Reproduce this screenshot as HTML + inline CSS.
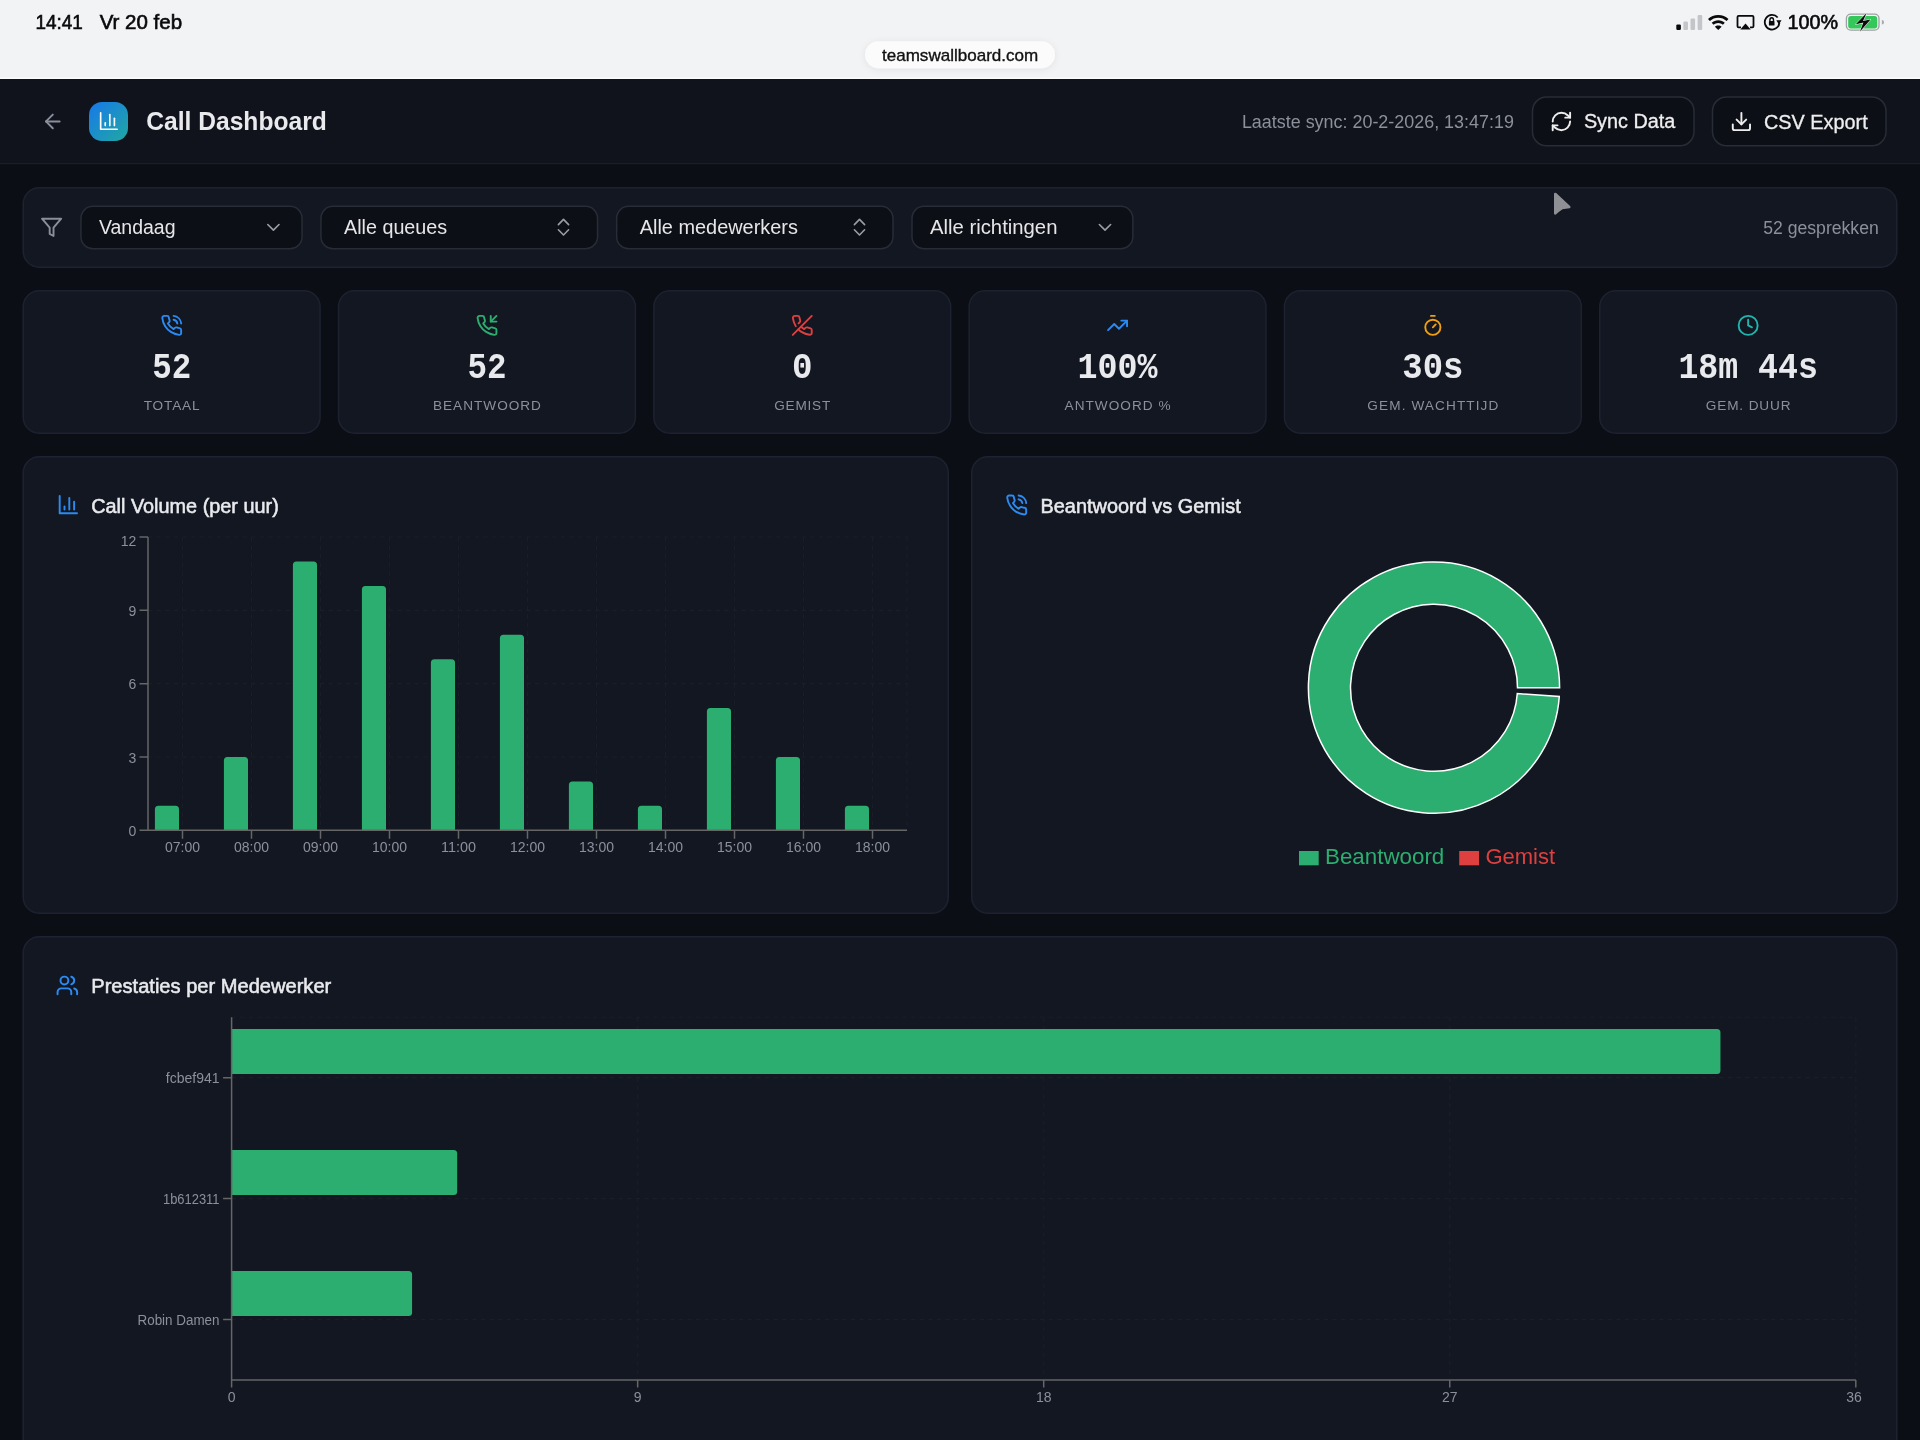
<!DOCTYPE html><html><head><meta charset="utf-8"><title>Call Dashboard</title><style>html,body{margin:0;padding:0;background:#0b0e14;width:1920px;height:1440px;overflow:hidden}svg{display:block;font-family:"Liberation Sans",sans-serif;will-change:transform}</style></head><body>
<svg width="1920" height="1440" viewBox="0 0 1920 1440">
<defs><linearGradient id="lg" x1="0" y1="0" x2="1" y2="1"><stop offset="0" stop-color="#1778ea"/><stop offset="1" stop-color="#20a9a2"/></linearGradient><filter id="sh" x="-20%" y="-50%" width="140%" height="200%"><feDropShadow dx="0" dy="1" stdDeviation="3.5" flood-color="#000" flood-opacity="0.07"/></filter></defs>
<rect x="0" y="0" width="1920" height="1440" fill="#0b0e14"/>
<rect x="0" y="0" width="1920" height="79" fill="#f2f3f5"/>
<rect x="0" y="77.5" width="1920" height="1.5" fill="#fbfbfc"/>
<text x="35.5" y="29" font-size="19.5" fill="#0a0a0a" stroke="#0a0a0a" stroke-width="0.6" textLength="47.3" lengthAdjust="spacingAndGlyphs">14:41</text>
<text x="99.7" y="29" font-size="19.5" fill="#0a0a0a" stroke="#0a0a0a" stroke-width="0.6" textLength="82.4" lengthAdjust="spacingAndGlyphs">Vr 20 feb</text>
<rect x="865" y="41.25" width="190" height="27" rx="13.5" fill="#fbfbfc" filter="url(#sh)"/>
<text x="882" y="60.5" font-size="17" fill="#111111" stroke="#111111" stroke-width="0.35" textLength="156.2" lengthAdjust="spacingAndGlyphs">teamswallboard.com</text>
<rect x="1676.30" y="24.40" width="4.6" height="5.6" rx="1.2" fill="#0a0a0a"/>
<rect x="1683.40" y="21.50" width="4.6" height="8.5" rx="1.2" fill="#c4c5c8"/>
<rect x="1690.50" y="18.50" width="4.6" height="11.5" rx="1.2" fill="#c4c5c8"/>
<rect x="1697.60" y="15.00" width="4.6" height="15" rx="1.2" fill="#c4c5c8"/>
<g transform="translate(1708,15)" fill="#0a0a0a"><path d="M10.25 0C6.3 0 2.75 1.5 0 4l1.9 1.95C4.15 3.9 7.05 2.7 10.25 2.7s6.1 1.2 8.35 3.25L20.5 4C17.75 1.5 14.2 0 10.25 0z"/><path d="M10.25 5.2c-2.5 0-4.8 .95-6.55 2.55l1.9 1.95c1.25-1.1 2.9-1.8 4.65-1.8s3.4.7 4.65 1.8l1.9-1.95C15.05 6.15 12.75 5.2 10.25 5.2z"/><path d="M10.25 10.4c-1.3 0-2.5.5-3.4 1.3L10.25 15l3.4-3.3c-.9-.8-2.1-1.3-3.4-1.3z"/></g>
<g transform="translate(1736.5,15)"><path d="M4.5 11.5H2.2A1.2 1.2 0 0 1 1 10.3V1.2A1.2 1.2 0 0 1 2.2 0h13.6A1.2 1.2 0 0 1 17 1.2v9.1a1.2 1.2 0 0 1-1.2 1.2h-2.3" fill="none" stroke="#0a0a0a" stroke-width="1.8" transform="translate(0,0.9)"/><path d="M9 8.6l5.2 5.8H3.8z" fill="#0a0a0a"/></g>
<g fill="none" stroke="#0a0a0a" stroke-width="1.8"><path d="M1779.37 22.84 A7.3 7.3 0 1 1 1777.69 17.5"/></g>
<path d="M1776.3 20.3h5.2l-2.6 4.2z" fill="#0a0a0a"/>
<rect x="1768.9" y="21.0" width="5.6" height="4.6" rx="0.7" fill="#0a0a0a"/>
<path d="M1769.9 21.3v-1.2a1.8 2.3 0 0 1 3.6 0v1.2" fill="none" stroke="#0a0a0a" stroke-width="1.4"/>
<text x="1787.5" y="29" font-size="20" fill="#0a0a0a" stroke="#0a0a0a" stroke-width="0.6" textLength="50.5" lengthAdjust="spacingAndGlyphs">100%</text>
<rect x="1846.4" y="14.1" width="32.6" height="16" rx="4.3" fill="none" stroke="#9fa0a3" stroke-width="1.3"/>
<rect x="1848.2" y="15.9" width="29" height="12.5" rx="2.6" fill="#34c759"/>
<path d="M1881.9 20v4.6a2.1 2.3 0 0 0 0-4.6z" fill="#a9aaad"/>
<path d="M1866.6 13.1L1855.8 24.3L1863.4 22.6L1860.0 31.4L1870.5 19.5L1863.0 21.1Z" fill="#0a0a0a" stroke="#f2f3f5" stroke-width="1.1" stroke-linejoin="round"/>
<path d="M1866.6 13.1L1855.8 24.3L1863.4 22.6L1860.0 31.4L1870.5 19.5L1863.0 21.1Z" fill="#0a0a0a"/>
<rect x="0" y="79" width="1920" height="84.5" fill="#10131b"/>
<rect x="0" y="163" width="1920" height="1.2" fill="#1a1e28"/>
<g transform="translate(41.10,109.70) scale(0.9750)" fill="none" stroke="#8a8f9c" stroke-width="2" stroke-linecap="round" stroke-linejoin="round"><path d="m12 19-7-7 7-7"/><path d="M19 12H5"/></g>
<rect x="89" y="102" width="39" height="39" rx="13" fill="url(#lg)"/>
<g transform="translate(97.90,110.00) scale(0.9167)" fill="none" stroke="#ffffff" stroke-width="1.8" stroke-linecap="round" stroke-linejoin="round"><path d="M3 3v18h18"/><path d="M18 17V9"/><path d="M13 17V5"/><path d="M8 17v-3"/></g>
<text x="146.25" y="130.2" font-size="26" fill="#e9eaed" font-weight="bold" textLength="180.5" lengthAdjust="spacingAndGlyphs">Call Dashboard</text>
<text x="1241.9" y="127.8" font-size="18" fill="#8b909b" textLength="272" lengthAdjust="spacingAndGlyphs">Laatste sync: 20-2-2026, 13:47:19</text>
<rect x="1532.5" y="97" width="161.5" height="48.75" rx="14" fill="#0c0f15" stroke="#272c37" stroke-width="1.5"/>
<g transform="translate(1549.80,109.90) scale(0.9667)" fill="none" stroke="#eeeeef" stroke-width="2" stroke-linecap="round" stroke-linejoin="round"><path d="M3 12a9 9 0 0 1 9-9 9.75 9.75 0 0 1 6.74 2.74L21 8"/><path d="M21 3v5h-5"/><path d="M21 12a9 9 0 0 1-9 9 9.75 9.75 0 0 1-6.74-2.74L3 16"/><path d="M8 16H3v5"/></g>
<text x="1583.9" y="128.1" font-size="19.5" fill="#eeeeef" stroke="#eeeeef" stroke-width="0.3" textLength="91.5" lengthAdjust="spacingAndGlyphs">Sync Data</text>
<rect x="1712.5" y="97" width="173.5" height="48.75" rx="14" fill="#0c0f15" stroke="#272c37" stroke-width="1.5"/>
<g transform="translate(1729.90,110.00) scale(0.9583)" fill="none" stroke="#eeeeef" stroke-width="2" stroke-linecap="round" stroke-linejoin="round"><path d="M21 15v4a2 2 0 0 1-2 2H5a2 2 0 0 1-2-2v-4"/><polyline points="7 10 12 15 17 10"/><line x1="12" x2="12" y1="15" y2="3"/></g>
<text x="1764" y="128.5" font-size="20" fill="#eeeeef" stroke="#eeeeef" stroke-width="0.3" textLength="103.7" lengthAdjust="spacingAndGlyphs">CSV Export</text>
<rect x="23.25" y="187.75" width="1873.5" height="79.5" rx="16" fill="#131721" stroke="#1d2230" stroke-width="1.5"/>
<g transform="translate(40.10,215.80) scale(0.9583)" fill="none" stroke="#8a8f9c" stroke-width="2" stroke-linecap="round" stroke-linejoin="round"><polygon points="22 3 2 3 10 12.46 10 19 14 21 14 12.46 22 3"/></g>
<rect x="80.95" y="206.35" width="221.1" height="42.3" rx="12" fill="#0c0f15" stroke="#272c37" stroke-width="1.5"/>
<text x="98.9" y="234" font-size="20" fill="#e6e6e9" textLength="76.6" lengthAdjust="spacingAndGlyphs">Vandaag</text>
<g transform="translate(262.15,216.10) scale(0.9375)" fill="none" stroke="#9a9ea8" stroke-width="1.75" stroke-linecap="round" stroke-linejoin="round"><path d="m6 9 6 6 6-6"/></g>
<rect x="320.95" y="206.35" width="276.6" height="42.3" rx="12" fill="#0c0f15" stroke="#272c37" stroke-width="1.5"/>
<text x="344.0" y="234" font-size="20" fill="#e6e6e9" textLength="103.2" lengthAdjust="spacingAndGlyphs">Alle queues</text>
<path d="M558.40 224.6L563.50 219.4L568.60 224.6M558.40 229.8L563.50 235.0L568.60 229.8" fill="none" stroke="#9a9ea8" stroke-width="1.6" stroke-linecap="round" stroke-linejoin="round"/>
<rect x="616.65" y="206.35" width="276.35" height="42.3" rx="12" fill="#0c0f15" stroke="#272c37" stroke-width="1.5"/>
<text x="639.6999999999999" y="234" font-size="20" fill="#e6e6e9" textLength="158.2" lengthAdjust="spacingAndGlyphs">Alle medewerkers</text>
<path d="M854.40 224.6L859.50 219.4L864.60 224.6M854.40 229.8L859.50 235.0L864.60 229.8" fill="none" stroke="#9a9ea8" stroke-width="1.6" stroke-linecap="round" stroke-linejoin="round"/>
<rect x="912.0" y="206.35" width="220.85" height="42.3" rx="12" fill="#0c0f15" stroke="#272c37" stroke-width="1.5"/>
<text x="929.95" y="234" font-size="20" fill="#e6e6e9" textLength="127.5" lengthAdjust="spacingAndGlyphs">Alle richtingen</text>
<g transform="translate(1093.75,216.10) scale(0.9375)" fill="none" stroke="#9a9ea8" stroke-width="1.75" stroke-linecap="round" stroke-linejoin="round"><path d="m6 9 6 6 6-6"/></g>
<text x="1763.25" y="233.75" font-size="18" fill="#8b909b" textLength="115.5" lengthAdjust="spacingAndGlyphs">52 gesprekken</text>
<path d="M1555.3 194.0L1569.2 207.0Q1565 207.6 1562.2 208.0Q1558.5 210.5 1555.3 213.3Z" fill="#8f9095" stroke="#8f9095" stroke-width="2.6" stroke-linejoin="round"/>
<rect x="23.25" y="290.75" width="296.8" height="142.5" rx="16" fill="#131721" stroke="#1d2230" stroke-width="1.5"/>
<g transform="translate(160.25,314.00) scale(0.9500)" fill="none" stroke="#2b8bf2" stroke-width="2" stroke-linecap="round" stroke-linejoin="round"><path d="M22 16.92v3a2 2 0 0 1-2.18 2 19.79 19.79 0 0 1-8.63-3.07 19.5 19.5 0 0 1-6-6 19.79 19.79 0 0 1-3.07-8.67A2 2 0 0 1 4.11 2h3a2 2 0 0 1 2 1.72 12.84 12.84 0 0 0 .7 2.81 2 2 0 0 1-.45 2.11L8.09 9.91a16 16 0 0 0 6 6l1.27-1.27a2 2 0 0 1 2.11-.45 12.84 12.84 0 0 0 2.81.7A2 2 0 0 1 22 16.92z"/><path d="M14.05 2a9 9 0 0 1 8 7.94"/><path d="M14.05 6A5 5 0 0 1 18 10"/></g>
<text x="171.65" y="378.2" font-size="37" fill="#e9eaed" font-weight="bold" text-anchor="middle" textLength="39" lengthAdjust="spacingAndGlyphs" font-family="Liberation Mono">52</text>
<text x="171.65" y="410" font-size="13.6" fill="#8b909b" text-anchor="middle" textLength="55.9" lengthAdjust="spacing">TOTAAL</text>
<rect x="338.55" y="290.75" width="296.8" height="142.5" rx="16" fill="#131721" stroke="#1d2230" stroke-width="1.5"/>
<g transform="translate(475.55,314.00) scale(0.9500)" fill="none" stroke="#2cae70" stroke-width="2" stroke-linecap="round" stroke-linejoin="round"><path d="M22 16.92v3a2 2 0 0 1-2.18 2 19.79 19.79 0 0 1-8.63-3.07 19.5 19.5 0 0 1-6-6 19.79 19.79 0 0 1-3.07-8.67A2 2 0 0 1 4.11 2h3a2 2 0 0 1 2 1.72 12.84 12.84 0 0 0 .7 2.81 2 2 0 0 1-.45 2.11L8.09 9.91a16 16 0 0 0 6 6l1.27-1.27a2 2 0 0 1 2.11-.45 12.84 12.84 0 0 0 2.81.7A2 2 0 0 1 22 16.92z"/><polyline points="16 2 16 8 22 8"/><line x1="22" y1="2" x2="16" y2="8"/></g>
<text x="486.95" y="378.2" font-size="37" fill="#e9eaed" font-weight="bold" text-anchor="middle" textLength="39" lengthAdjust="spacingAndGlyphs" font-family="Liberation Mono">52</text>
<text x="486.95" y="410" font-size="13.6" fill="#8b909b" text-anchor="middle" textLength="108" lengthAdjust="spacing">BEANTWOORD</text>
<rect x="653.85" y="290.75" width="296.8" height="142.5" rx="16" fill="#131721" stroke="#1d2230" stroke-width="1.5"/>
<g transform="translate(790.85,314.00) scale(0.9500)" fill="none" stroke="#de3f3f" stroke-width="2" stroke-linecap="round" stroke-linejoin="round"><path d="M10.68 13.31a16 16 0 0 0 3.41 2.6l1.27-1.27a2 2 0 0 1 2.11-.45 12.84 12.84 0 0 0 2.81.7 2 2 0 0 1 1.72 2v3a2 2 0 0 1-2.18 2 19.79 19.79 0 0 1-8.63-3.07 19.42 19.42 0 0 1-3.33-2.67m-2.67-3.34a19.79 19.79 0 0 1-3.07-8.63A2 2 0 0 1 4.11 2h3a2 2 0 0 1 2 1.72 12.84 12.84 0 0 0 .7 2.81 2 2 0 0 1-.45 2.11L8.09 9.91"/><line x1="22" y1="2" x2="2" y2="22"/></g>
<text x="802.25" y="378.2" font-size="37" fill="#e9eaed" font-weight="bold" text-anchor="middle" textLength="20.5" lengthAdjust="spacingAndGlyphs" font-family="Liberation Mono">0</text>
<text x="802.25" y="410" font-size="13.6" fill="#8b909b" text-anchor="middle" textLength="56" lengthAdjust="spacing">GEMIST</text>
<rect x="969.15" y="290.75" width="296.8" height="142.5" rx="16" fill="#131721" stroke="#1d2230" stroke-width="1.5"/>
<g transform="translate(1106.15,314.00) scale(0.9500)" fill="none" stroke="#2b8bf2" stroke-width="2" stroke-linecap="round" stroke-linejoin="round"><polyline points="22 7 13.5 15.5 8.5 10.5 2 17"/><polyline points="16 7 22 7 22 13"/></g>
<text x="1117.55" y="378.2" font-size="37" fill="#e9eaed" font-weight="bold" text-anchor="middle" textLength="80" lengthAdjust="spacingAndGlyphs" font-family="Liberation Mono">100%</text>
<text x="1117.55" y="410" font-size="13.6" fill="#8b909b" text-anchor="middle" textLength="106" lengthAdjust="spacing">ANTWOORD %</text>
<rect x="1284.45" y="290.75" width="296.8" height="142.5" rx="16" fill="#131721" stroke="#1d2230" stroke-width="1.5"/>
<g transform="translate(1421.45,314.00) scale(0.9500)" fill="none" stroke="#f19f10" stroke-width="2" stroke-linecap="round" stroke-linejoin="round"><line x1="10" x2="14" y1="2" y2="2"/><line x1="12" x2="15" y1="14" y2="11"/><circle cx="12" cy="14" r="8"/></g>
<text x="1432.85" y="378.2" font-size="37" fill="#e9eaed" font-weight="bold" text-anchor="middle" textLength="61" lengthAdjust="spacingAndGlyphs" font-family="Liberation Mono">30s</text>
<text x="1432.85" y="410" font-size="13.6" fill="#8b909b" text-anchor="middle" textLength="131" lengthAdjust="spacing">GEM. WACHTTIJD</text>
<rect x="1599.75" y="290.75" width="296.8" height="142.5" rx="16" fill="#131721" stroke="#1d2230" stroke-width="1.5"/>
<g transform="translate(1736.75,314.00) scale(0.9500)" fill="none" stroke="#20b6ad" stroke-width="2" stroke-linecap="round" stroke-linejoin="round"><circle cx="12" cy="12" r="10"/><polyline points="12 6 12 12 16 14"/></g>
<text x="1748.15" y="378.2" font-size="37" fill="#e9eaed" font-weight="bold" text-anchor="middle" textLength="139.5" lengthAdjust="spacingAndGlyphs" font-family="Liberation Mono">18m 44s</text>
<text x="1748.15" y="410" font-size="13.6" fill="#8b909b" text-anchor="middle" textLength="84.8" lengthAdjust="spacing">GEM. DUUR</text>
<rect x="23.25" y="456.75" width="925" height="456.5" rx="16" fill="#131721" stroke="#1d2230" stroke-width="1.5"/>
<rect x="971.75" y="456.75" width="925.5" height="456.5" rx="16" fill="#131721" stroke="#1d2230" stroke-width="1.5"/>
<rect x="23.25" y="936.75" width="1873.5" height="600" rx="16" fill="#131721" stroke="#1d2230" stroke-width="1.5"/>
<g transform="translate(56.80,493.10) scale(0.9625)" fill="none" stroke="#2b8bf2" stroke-width="2" stroke-linecap="round" stroke-linejoin="round"><path d="M3 3v18h18"/><path d="M18 17V9"/><path d="M13 17V5"/><path d="M8 17v-3"/></g>
<text x="91.25" y="512.5" font-size="20.5" fill="#e9eaed" stroke="#e9eaed" stroke-width="0.55" textLength="187.5" lengthAdjust="spacingAndGlyphs">Call Volume (per uur)</text>
<g transform="translate(1005.20,493.60) scale(0.9542)" fill="none" stroke="#2b8bf2" stroke-width="2" stroke-linecap="round" stroke-linejoin="round"><path d="M22 16.92v3a2 2 0 0 1-2.18 2 19.79 19.79 0 0 1-8.63-3.07 19.5 19.5 0 0 1-6-6 19.79 19.79 0 0 1-3.07-8.67A2 2 0 0 1 4.11 2h3a2 2 0 0 1 2 1.72 12.84 12.84 0 0 0 .7 2.81 2 2 0 0 1-.45 2.11L8.09 9.91a16 16 0 0 0 6 6l1.27-1.27a2 2 0 0 1 2.11-.45 12.84 12.84 0 0 0 2.81.7A2 2 0 0 1 22 16.92z"/><path d="M14.05 2a9 9 0 0 1 8 7.94"/><path d="M14.05 6A5 5 0 0 1 18 10"/></g>
<text x="1040.5" y="512.5" font-size="20.5" fill="#e9eaed" stroke="#e9eaed" stroke-width="0.55" textLength="200.25" lengthAdjust="spacingAndGlyphs">Beantwoord vs Gemist</text>
<g transform="translate(55.60,973.70) scale(0.9792)" fill="none" stroke="#2b8bf2" stroke-width="2" stroke-linecap="round" stroke-linejoin="round"><path d="M16 21v-2a4 4 0 0 0-4-4H6a4 4 0 0 0-4 4v2"/><circle cx="9" cy="7" r="4"/><path d="M22 21v-2a4 4 0 0 0-3-3.87"/><path d="M16 3.13a4 4 0 0 1 0 7.75"/></g>
<text x="91.25" y="992.5" font-size="20.5" fill="#e9eaed" stroke="#e9eaed" stroke-width="0.55" textLength="240" lengthAdjust="spacingAndGlyphs">Prestaties per Medewerker</text>
<path d="M148.0 537.00H907.0 M148.0 610.33H907.0 M148.0 683.65H907.0 M148.0 756.97H907.0 M182.50 537.0V830.3 M251.50 537.0V830.3 M320.50 537.0V830.3 M389.50 537.0V830.3 M458.50 537.0V830.3 M527.50 537.0V830.3 M596.50 537.0V830.3 M665.50 537.0V830.3 M734.50 537.0V830.3 M803.50 537.0V830.3 M872.50 537.0V830.3 M907.0 537.0V830.3" stroke="#1a1e27" stroke-width="1.1" stroke-dasharray="4.3 4.3" fill="none"/>
<path d="M154.90 830.3V809.36Q154.90 805.86 158.40 805.86H175.50Q179.00 805.86 179.00 809.36V830.3Z" fill="#2cae70"/>
<text x="182.50" y="852" font-size="14" fill="#8b909b" text-anchor="middle" textLength="35" lengthAdjust="spacingAndGlyphs">07:00</text>
<path d="M223.90 830.3V760.47Q223.90 756.97 227.40 756.97H244.50Q248.00 756.97 248.00 760.47V830.3Z" fill="#2cae70"/>
<text x="251.50" y="852" font-size="14" fill="#8b909b" text-anchor="middle" textLength="35" lengthAdjust="spacingAndGlyphs">08:00</text>
<path d="M292.90 830.3V564.94Q292.90 561.44 296.40 561.44H313.50Q317.00 561.44 317.00 564.94V830.3Z" fill="#2cae70"/>
<text x="320.50" y="852" font-size="14" fill="#8b909b" text-anchor="middle" textLength="35" lengthAdjust="spacingAndGlyphs">09:00</text>
<path d="M361.90 830.3V589.38Q361.90 585.88 365.40 585.88H382.50Q386.00 585.88 386.00 589.38V830.3Z" fill="#2cae70"/>
<text x="389.50" y="852" font-size="14" fill="#8b909b" text-anchor="middle" textLength="35" lengthAdjust="spacingAndGlyphs">10:00</text>
<path d="M430.90 830.3V662.71Q430.90 659.21 434.40 659.21H451.50Q455.00 659.21 455.00 662.71V830.3Z" fill="#2cae70"/>
<text x="458.50" y="852" font-size="14" fill="#8b909b" text-anchor="middle" textLength="35" lengthAdjust="spacingAndGlyphs">11:00</text>
<path d="M499.90 830.3V638.27Q499.90 634.77 503.40 634.77H520.50Q524.00 634.77 524.00 638.27V830.3Z" fill="#2cae70"/>
<text x="527.50" y="852" font-size="14" fill="#8b909b" text-anchor="middle" textLength="35" lengthAdjust="spacingAndGlyphs">12:00</text>
<path d="M568.90 830.3V784.92Q568.90 781.42 572.40 781.42H589.50Q593.00 781.42 593.00 784.92V830.3Z" fill="#2cae70"/>
<text x="596.50" y="852" font-size="14" fill="#8b909b" text-anchor="middle" textLength="35" lengthAdjust="spacingAndGlyphs">13:00</text>
<path d="M637.90 830.3V809.36Q637.90 805.86 641.40 805.86H658.50Q662.00 805.86 662.00 809.36V830.3Z" fill="#2cae70"/>
<text x="665.50" y="852" font-size="14" fill="#8b909b" text-anchor="middle" textLength="35" lengthAdjust="spacingAndGlyphs">14:00</text>
<path d="M706.90 830.3V711.59Q706.90 708.09 710.40 708.09H727.50Q731.00 708.09 731.00 711.59V830.3Z" fill="#2cae70"/>
<text x="734.50" y="852" font-size="14" fill="#8b909b" text-anchor="middle" textLength="35" lengthAdjust="spacingAndGlyphs">15:00</text>
<path d="M775.90 830.3V760.47Q775.90 756.97 779.40 756.97H796.50Q800.00 756.97 800.00 760.47V830.3Z" fill="#2cae70"/>
<text x="803.50" y="852" font-size="14" fill="#8b909b" text-anchor="middle" textLength="35" lengthAdjust="spacingAndGlyphs">16:00</text>
<path d="M844.90 830.3V809.36Q844.90 805.86 848.40 805.86H865.50Q869.00 805.86 869.00 809.36V830.3Z" fill="#2cae70"/>
<text x="872.50" y="852" font-size="14" fill="#8b909b" text-anchor="middle" textLength="35" lengthAdjust="spacingAndGlyphs">18:00</text>
<path d="M148.0 537.0V830.3 M139.5 830.3H907.0 M139.5 537.00H148.0 M139.5 610.33H148.0 M139.5 683.65H148.0 M139.5 756.97H148.0 M182.50 830.3V838.8 M251.50 830.3V838.8 M320.50 830.3V838.8 M389.50 830.3V838.8 M458.50 830.3V838.8 M527.50 830.3V838.8 M596.50 830.3V838.8 M665.50 830.3V838.8 M734.50 830.3V838.8 M803.50 830.3V838.8 M872.50 830.3V838.8" stroke="#666666" stroke-width="1.5" fill="none"/>
<text x="136.3" y="836.00" font-size="14" fill="#8b909b" text-anchor="end">0</text>
<text x="136.3" y="762.57" font-size="14" fill="#8b909b" text-anchor="end">3</text>
<text x="136.3" y="689.25" font-size="14" fill="#8b909b" text-anchor="end">6</text>
<text x="136.3" y="615.93" font-size="14" fill="#8b909b" text-anchor="end">9</text>
<text x="136.3" y="546.2" font-size="14" fill="#8b909b" text-anchor="end">12</text>
<path d="M1559.60 687.70 A125.6 125.6 0 1 0 1559.29 696.46 L1517.30 693.52 A83.5 83.5 0 1 1 1517.50 687.70 Z" fill="#2cae70" stroke="#ffffff" stroke-width="1.5"/>
<rect x="1299" y="851" width="19.7" height="14.3" fill="#2cae70"/>
<text x="1325" y="863.9" font-size="22.5" fill="#2cae70" textLength="119.3" lengthAdjust="spacingAndGlyphs">Beantwoord</text>
<rect x="1459.2" y="851" width="19.9" height="14.3" fill="#de3f3f"/>
<text x="1485.4" y="863.9" font-size="22.5" fill="#de3f3f" textLength="69.7" lengthAdjust="spacingAndGlyphs">Gemist</text>
<path d="M231.6 1077.67H1855.8 M231.6 1198.60H1855.8 M231.6 1319.53H1855.8 M231.6 1017.2H1855.8 M637.65 1017.2V1380.0 M1043.70 1017.2V1380.0 M1449.75 1017.2V1380.0 M1855.80 1017.2V1380.0" stroke="#1a1e27" stroke-width="1.1" stroke-dasharray="4.3 4.3" fill="none"/>
<path d="M231.6 1029.07H1716.95Q1720.45 1029.07 1720.45 1032.57V1070.57Q1720.45 1074.07 1716.95 1074.07H231.6Z" fill="#2cae70"/>
<text x="219.5" y="1082.87" font-size="14" fill="#8b909b" text-anchor="end" textLength="53.7" lengthAdjust="spacingAndGlyphs">fcbef941</text>
<path d="M231.6 1150.00H453.68Q457.18 1150.00 457.18 1153.50V1191.50Q457.18 1195.00 453.68 1195.00H231.6Z" fill="#2cae70"/>
<text x="219.5" y="1203.80" font-size="14" fill="#8b909b" text-anchor="end" textLength="56.5" lengthAdjust="spacingAndGlyphs">1b612311</text>
<path d="M231.6 1270.93H408.57Q412.07 1270.93 412.07 1274.43V1312.43Q412.07 1315.93 408.57 1315.93H231.6Z" fill="#2cae70"/>
<text x="219.5" y="1324.73" font-size="14" fill="#8b909b" text-anchor="end" textLength="82" lengthAdjust="spacingAndGlyphs">Robin Damen</text>
<path d="M231.6 1017.2V1387.5 M231.6 1380.0H1855.8 M223.1 1077.67H231.6 M223.1 1198.60H231.6 M223.1 1319.53H231.6 M637.65 1380.0V1387.5 M1043.70 1380.0V1387.5 M1449.75 1380.0V1387.5 M1855.80 1380.0V1387.5" stroke="#666666" stroke-width="1.5" fill="none"/>
<text x="231.60" y="1401.5" font-size="14" fill="#8b909b" text-anchor="middle">0</text>
<text x="637.65" y="1401.5" font-size="14" fill="#8b909b" text-anchor="middle">9</text>
<text x="1043.70" y="1401.5" font-size="14" fill="#8b909b" text-anchor="middle">18</text>
<text x="1449.75" y="1401.5" font-size="14" fill="#8b909b" text-anchor="middle">27</text>
<text x="1861.8" y="1401.5" font-size="14" fill="#8b909b" text-anchor="end">36</text>
</svg></body></html>
